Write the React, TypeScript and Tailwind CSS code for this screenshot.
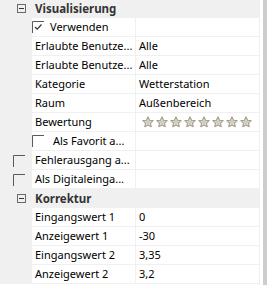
import type { ReactNode } from 'react';

const font = { fontFamily: '"Noto Sans", "Open Sans", sans-serif' };

function Box({ checked = false }: { checked?: boolean }) {
  return (
    <svg width="12" height="12" viewBox="0 0 12 12" className="shrink-0">
      <path d="M0.5 12V0.5H12" fill="none" stroke="#5a5a5a" strokeWidth="1" />
      {checked && <path d="M3 6l2.2 2.2L9.5 3.5" fill="none" stroke="#333" strokeWidth="1.2" />}
    </svg>
  );
}

function Star() {
  return (
    <svg width="12" height="12" viewBox="0 0 24 24" className="shrink-0">
      <path
        d="M12 1.8l3.1 6.6 7.1.9-5.2 4.9 1.4 7.1L12 17.8l-6.4 3.5L7 14.2 1.8 9.3l7.1-.9z"
        fill="#e9e6dc"
        stroke="#a39d8a"
        strokeWidth="2.2"
        strokeLinejoin="round"
      />
      <path d="M12 6.5l1.7 3.6 3.9.5-2.9 2.7.8 3.9L12 15.3l-3.5 1.9.8-3.9-2.9-2.7 3.9-.5z" fill="#cfcabb" />
    </svg>
  );
}

function Category({ label }: { label: string }) {
  return (
    <div className="flex h-[19px] items-center bg-[#f0f0f0]">
      <div className="flex w-[35px] shrink-0 items-center pl-[17px]">
        <svg width="9" height="9" viewBox="0 0 9 9">
          <rect x="0.5" y="0.5" width="8" height="8" fill="none" stroke="#6a6a6a" />
          <path d="M2 4.5h5" stroke="#333" />
        </svg>
      </div>
      <span className="text-[11.5px] font-bold text-[#333]">{label}</span>
    </div>
  );
}

function Row({ margin, name, value }: { margin?: ReactNode; name: ReactNode; value?: ReactNode }) {
  return (
    <div className="flex h-[19px]">
      <div className="flex w-[32px] shrink-0 items-center bg-[#f0f0f0] pl-[13px]">{margin}</div>
      <div className="flex w-[103px] shrink-0 items-center overflow-hidden whitespace-nowrap border-b border-[#f0f0f0] pl-[3px] text-[11px] text-black">
        {name}
      </div>
      <div className="flex flex-1 items-center whitespace-nowrap border-b border-l border-[#f0f0f0] pl-[3px] text-[11px] text-black">
        {value}
      </div>
    </div>
  );
}

export default function App() {
  return (
    <div className="flex h-[285px] w-[267px] overflow-hidden bg-white" style={font}>
      <div className="-mt-[1px] flex flex-1 flex-col">
        <Category label="Visualisierung" />
        <Row
          name={
            <div className="-ml-[3px] flex items-center gap-[6px]">
              <Box checked />
              <span>Verwenden</span>
            </div>
          }
        />
        <Row name="Erlaubte Benutze..." value="Alle" />
        <Row name="Erlaubte Benutze..." value="Alle" />
        <Row name="Kategorie" value="Wetterstation" />
        <Row name="Raum" value="Außenbereich" />
        <Row
          name="Bewertung"
          value={
            <div className="flex gap-[2px] pl-[3px]">
              {Array.from({ length: 8 }).map((_, i) => (
                <Star key={i} />
              ))}
            </div>
          }
        />
        <Row
          name={
            <div className="-ml-[3px] flex items-center gap-[9px]">
              <Box />
              <span>Als Favorit a...</span>
            </div>
          }
        />
        <Row margin={<Box />} name="Fehlerausgang a..." />
        <Row margin={<Box />} name="Als Digitaleinga..." />
        <Category label="Korrektur" />
        <Row name="Eingangswert 1" value="0" />
        <Row name="Anzeigewert 1" value="-30" />
        <Row name="Eingangswert 2" value="3,35" />
        <Row name="Anzeigewert 2" value="3,2" />
      </div>
      <div className="w-[1px] bg-[#f0f0f0]" />
      <div className="w-[3px] bg-white" />
      <div className="w-[4px] bg-[#cdcdcd]" />
    </div>
  );
}
